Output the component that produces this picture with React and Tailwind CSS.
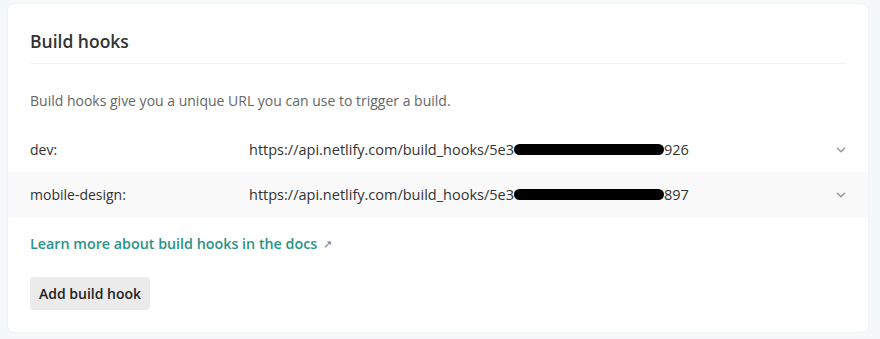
import React from 'react';
import { ChevronDown } from 'lucide-react';

const hooks = [
  { name: 'dev:', prefix: 'https://api.netlify.com/build_hooks/5e3', suffix: '926' },
  { name: 'mobile-design:', prefix: 'https://api.netlify.com/build_hooks/5e3', suffix: '897' },
];

const HookRow = ({ hook, shaded }) => (
  <div className={'flex items-center h-[45px] pl-[22px] pr-[20px] ' + (shaded ? 'bg-[#f9f9f9]' : '')}>
    <div className="w-[219px] text-[#333] text-[14px]">{hook.name}</div>
    <div className="flex-1 flex items-center text-[#333] text-[14.5px]">
      <span>{hook.prefix}</span>
      {/* redacted part of the token */}
      <span className="inline-block h-[11px] w-[150px] bg-black rounded-full" />
      <span>{hook.suffix}</span>
    </div>
    <ChevronDown className="w-[14px] h-[14px] text-[#999]" strokeWidth={2.5} />
  </div>
);

export default function App() {
  return (
    <div
      className="w-[880px] h-[339px] bg-[#f5f8f9] pt-[4px] pl-[8px] pr-[12px]"
      style={{ fontFamily: '"Open Sans", "Noto Sans", sans-serif' }}
    >
      <div className="bg-white rounded-[6px] shadow-[0_0_2px_rgba(0,0,0,0.08)] pb-[22px]">
        <div className="px-[22px] pt-[24px]">
          <h2 className="text-[17.5px] font-semibold text-[#333] pb-[9px] border-b border-[#eef0f1]">
            Build hooks
          </h2>
          <p className="text-[14px] text-[#666] mt-[26px] mb-[16px]">
            Build hooks give you a unique URL you can use to trigger a build.
          </p>
        </div>

        {hooks.map((h, i) => (
          <HookRow key={h.name} hook={h} shaded={i === 1} />
        ))}

        <div className="px-[22px]">
          <a className="inline-flex items-center gap-[6px] mt-[16px] text-[14.3px] font-semibold text-[#2a9486]">
            Learn more about build hooks in the docs
            <span className="text-[11px] text-[#777] font-normal">↗</span>
          </a>
          <div className="mt-[22px]">
            <button className="bg-[#ebebeb] rounded-[4px] px-[9px] h-[33px] text-[14px] font-semibold text-[#222]">
              Add build hook
            </button>
          </div>
        </div>
      </div>
    </div>
  );
}
